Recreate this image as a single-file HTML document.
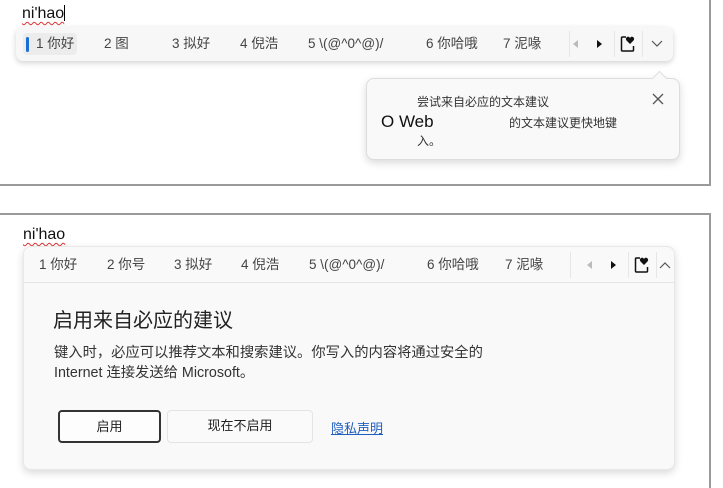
<!DOCTYPE html>
<html><head><meta charset="utf-8"><style>
*{margin:0;padding:0;box-sizing:border-box}
body{width:723px;height:488px;background:#fff;position:relative;overflow:hidden;font-family:"Liberation Sans","Noto Sans CJK SC",sans-serif;color:#333}
.abs{position:absolute}
.hl{position:absolute;height:2px;background:#9a9a9a}
.vl{position:absolute;width:2px;background:#9a9a9a}
.word{font-size:16px;color:#111;text-decoration:underline wavy #d33;text-decoration-thickness:1px;text-underline-offset:3px;line-height:20px}
.bar{position:absolute;height:34px;background:#f7f7f7;border-radius:7px;box-shadow:0 2px 6px rgba(0,0,0,.18);font-size:13.5px;color:#444}
.c span{position:absolute;top:9px;white-space:nowrap;line-height:16px;height:16px}
.sep{position:absolute;top:4px;width:1px;height:26px;background:#e6e6e6}
.card{position:absolute;background:#f9f9f9;border:1px solid #ddd;border-radius:8px;box-shadow:0 3px 8px rgba(0,0,0,.15)}
.btn{position:absolute;font-size:13px;text-align:center;line-height:30px;border-radius:4px}
</style></head><body>
<div class="vl" style="left:709px;top:0;height:186px"></div>
<div class="hl" style="left:0;top:184px;width:711px"></div>
<div class="hl" style="left:0;top:213px;width:711px"></div>
<div class="vl" style="left:709px;top:213px;height:275px"></div>

<div class="abs word" style="left:22px;top:4px">ni'hao<span style="text-decoration:none;display:inline-block;width:1px;height:16px;background:#000;vertical-align:-3px"></span></div>

<div class="bar c" style="left:16px;top:27px;width:657px">
 <div class="abs" style="left:7px;top:6px;width:54px;height:22px;background:#ececec;border-radius:4px"></div>
 <div class="abs" style="left:10px;top:10px;width:3px;height:15px;background:#1a6fd6;border-radius:2px"></div>
 <span style="left:20px">1 你好</span>
 <span style="left:88px">2 图</span>
 <span style="left:156px">3 拟好</span>
 <span style="left:224px">4 倪浩</span>
 <span style="left:292px">5 \(@^0^@)/</span>
 <span style="left:410px">6 你哈哦</span>
 <span style="left:487px">7 泥喙</span>
 <div class="sep" style="left:553px"></div>
 <svg class="abs" style="left:556px;top:13px" width="8" height="8"><path d="M6 0L1 4L6 8Z" fill="#bbb"/></svg>
 <svg class="abs" style="left:580px;top:13px" width="8" height="8"><path d="M1 0L6 4L1 8Z" fill="#111"/></svg>
 <div class="sep" style="left:598px"></div>
 <svg class="abs" style="left:604px;top:8px" width="16" height="18"><path d="M6 2H2.5Q1.5 2 1.5 3V15Q1.5 16 2.5 16H12.5Q13.5 16 13.5 15V11" fill="none" stroke="#111" stroke-width="1.5"/><path d="M10 9L6.5 5.5Q5 3.5 7 2Q9 1 10 3Q11 1 13 2Q15 3.5 13.5 5.5Z" fill="#111"/></svg>
 <div class="sep" style="left:626px"></div>
 <svg class="abs" style="left:635px;top:13px" width="12" height="8"><path d="M1 1L6 6L11 1" fill="none" stroke="#555" stroke-width="1.2"/></svg>
</div>

<div class="card" style="left:366px;top:78px;width:314px;height:82px">
 <div class="abs" style="left:287px;top:-6px;width:11px;height:11px;background:#f9f9f9;border-left:1px solid #ddd;border-top:1px solid #ddd;transform:rotate(45deg)"></div>
 <div class="abs" style="left:50px;top:14px;font-size:12px;color:#333">尝试来自必应的文本建议</div>
 <svg class="abs" style="left:285px;top:14px" width="12" height="12"><path d="M1 1L11 11M11 1L1 11" stroke="#555" stroke-width="1.3"/></svg>
 <div class="abs" style="left:14px;top:33px;font-size:17px;color:#111">O Web</div>
 <div class="abs" style="left:142px;top:35px;font-size:12px;color:#333">的文本建议更快地键</div>
 <div class="abs" style="left:50px;top:53px;font-size:12px;color:#333">入。</div>
</div>

<div class="abs word" style="left:23px;top:225px">ni'hao</div>

<div class="card" style="left:23px;top:246px;width:652px;height:224px;border-color:#e8e8e8">
 <div class="abs c" style="left:0;top:0;width:100%;height:36px;border-bottom:1px solid #e6e6e6;font-size:13.5px;color:#444">
  <span style="left:15px;top:10px">1 你好</span>
  <span style="left:83px;top:10px">2 你号</span>
  <span style="left:150px;top:10px">3 拟好</span>
  <span style="left:217px;top:10px">4 倪浩</span>
  <span style="left:285px;top:10px">5 \(@^0^@)/</span>
  <span style="left:403px;top:10px">6 你哈哦</span>
  <span style="left:481px;top:10px">7 泥喙</span>
  <div class="sep" style="left:546px;top:5px"></div>
  <svg class="abs" style="left:562px;top:14px" width="8" height="8"><path d="M6 0L1 4L6 8Z" fill="#bbb"/></svg>
  <svg class="abs" style="left:586px;top:14px" width="8" height="8"><path d="M1 0L6 4L1 8Z" fill="#111"/></svg>
  <div class="sep" style="left:604px;top:5px"></div>
  <svg class="abs" style="left:610px;top:9px" width="16" height="18"><path d="M6 2H2.5Q1.5 2 1.5 3V15Q1.5 16 2.5 16H12.5Q13.5 16 13.5 15V11" fill="none" stroke="#111" stroke-width="1.5"/><path d="M10 9L6.5 5.5Q5 3.5 7 2Q9 1 10 3Q11 1 13 2Q15 3.5 13.5 5.5Z" fill="#111"/></svg>
  <div class="sep" style="left:632px;top:5px"></div>
  <svg class="abs" style="left:635px;top:14px" width="12" height="8"><path d="M1 7L6 2L11 7" fill="none" stroke="#555" stroke-width="1.2"/></svg>
 </div>
 <div class="abs" style="left:29px;top:60px;font-size:20px;color:#222;line-height:28px">启用来自必应的建议</div>
 <div class="abs" style="left:30px;top:96px;font-size:14.3px;color:#333;line-height:20px;white-space:nowrap">键入时，必应可以推荐文本和搜索建议。你写入的内容将通过安全的<br>Internet 连接发送给 Microsoft。</div>
 <div class="btn" style="left:34px;top:163px;width:103px;height:33px;border:2px solid #333;background:#fdfdfd;color:#222;line-height:29px">启用</div>
 <div class="btn" style="left:143px;top:163px;width:146px;height:33px;background:#fafafa;border:1px solid #e4e4e4;color:#222">现在不启用</div>
 <div class="abs" style="left:307px;top:171px;font-size:13px;color:#1f5fbf;text-decoration:underline">隐私声明</div>
</div>
</body></html>
